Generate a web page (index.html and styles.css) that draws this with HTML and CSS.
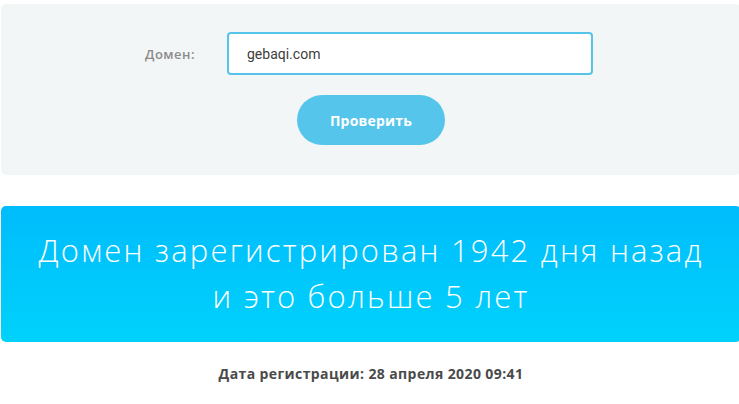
FILE: index.html
```html
<!DOCTYPE html>
<html lang="ru">
<head>
<meta charset="utf-8">
<title>Проверка домена</title>
<link rel="stylesheet" href="styles.css">
</head>
<body>
<div class="page">
  <section class="panel">
    <form class="check-form">
      <div class="form-row">
        <label class="label" for="domain">Домен:</label>
        <input class="input" id="domain" type="text" value="gebaqi.com">
      </div>
      <div class="btn-row">
        <button class="btn" type="button">Проверить</button>
      </div>
    </form>
  </section>
  <section class="banner">
    <p class="banner-text">Домен зарегистрирован 1942 дня назад<br>и это больше 5 лет</p>
  </section>
  <p class="reg-date">Дата регистрации: 28 апреля 2020 09:41</p>
</div>
</body>
</html>
```
FILE: styles.css
```css
html, body {
  margin: 0;
  padding: 0;
  background: #ffffff;
  overflow: hidden;
}
.page {
  width: 740px;
  margin-left: 1px;
  padding-top: 4px;
  font-family: "Open Sans", "DejaVu Sans", sans-serif;
}
.panel {
  background: #f3f6f7;
  border-radius: 5px;
  height: 171px;
  box-sizing: border-box;
  padding-top: 28px;
}
.form-row {
  display: flex;
  align-items: center;
  padding-left: 144px;
}
.label {
  width: 82px;
  font-size: 13px;
  font-weight: 600;
  letter-spacing: 0.5px;
  color: #8b8b8b;
}
.input {
  box-sizing: border-box;
  width: 366px;
  height: 43px;
  border: 2px solid #55c3ea;
  border-radius: 4px;
  background: #ffffff;
  padding: 0 0 0 18px;
  font-family: Roboto, "Liberation Sans", sans-serif;
  font-size: 14px;
  color: #3d3d3d;
  outline: none;
}
.btn-row {
  display: flex;
  justify-content: center;
  margin-top: 20px;
}
.btn {
  width: 148px;
  height: 50px;
  border: none;
  border-radius: 25px;
  background: #55c5ec;
  color: #ffffff;
  font-family: "Open Sans", "DejaVu Sans", sans-serif;
  font-size: 14px;
  font-weight: 700;
  letter-spacing: 0.2px;
  cursor: pointer;
}
.banner {
  margin-top: 31px;
  height: 136px;
  border-radius: 5px;
  background: linear-gradient(180deg, #00bcfc 0%, #00d2fc 100%);
  display: flex;
  align-items: center;
  justify-content: center;
}
.banner-text {
  margin: -2px 0 0;
  text-align: center;
  color: #ffffff;
  font-size: 31px;
  font-weight: 300;
  letter-spacing: 2.2px;
  line-height: 46px;
}
.reg-date {
  margin: 22px 0 0;
  text-align: center;
  font-size: 14px;
  font-weight: 700;
  letter-spacing: 0.4px;
  color: #4a4a4a;
}
```
